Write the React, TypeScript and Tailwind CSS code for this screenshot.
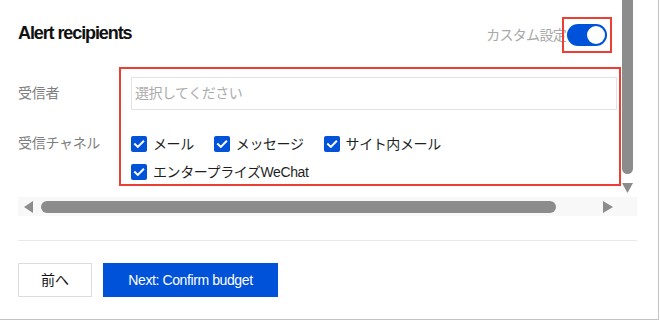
import React from 'react';

const font = { fontFamily: '"Liberation Sans", "Noto Sans CJK JP", sans-serif' };

const CheckItem: React.FC<{ label: string }> = ({ label }) => (
  <label className="flex items-center mr-[20px] h-[20px]">
    <span className="w-[16px] h-[16px] bg-[#0052d9] rounded-[2px] flex items-center justify-center">
      <svg width="12" height="12" viewBox="0 0 12 12" fill="none">
        <path d="M2 6.2 L4.8 8.9 L10.2 3.4" stroke="white" strokeWidth="2" strokeLinecap="square" />
      </svg>
    </span>
    <span className="ml-[6px] text-[14px] tracking-[-0.4px] text-[#1f1f1f] leading-[20px]">{label}</span>
  </label>
);

const App: React.FC = () => {
  return (
    <div className="w-[660px] h-[320px] bg-white" style={font}>
      <div className="w-[659px] h-[320px] border-r border-b border-[#c4c4c4] pl-[18px] pr-[21px] flex flex-col">
        {/* scroll frame */}
        <div className="flex flex-col h-[216px]">
          <div className="flex h-[197px]">
            <div className="w-[603px] overflow-hidden">
              <div className="flex items-center justify-between mt-[17px] h-[36px] pr-[9px]">
                <h3 className="text-[18px] font-bold tracking-[-1.1px] text-[#111] pb-[3px]">
                  Alert recipients
                </h3>
                <div className="flex items-center">
                  <span className="text-[14px] tracking-[-0.7px] text-[#a8a8a8]">カスタム設定</span>
                  <div className="w-[50px] h-[36px] border-2 border-[#ec3f33] flex items-center justify-center -ml-[4px]">
                    <div className="w-[40px] h-[22px] rounded-full bg-[#0052d9] flex items-center justify-end pr-[2px]">
                      <span className="w-[18px] h-[18px] rounded-full bg-white" />
                    </div>
                  </div>
                </div>
              </div>

              <div className="flex mt-[14px]">
                <div className="w-[101px] flex flex-col pt-[16px] gap-[30px] text-[14px] tracking-[-0.3px] text-[#7f7f7f] leading-[20px]">
                  <span>受信者</span>
                  <span>受信チャネル</span>
                </div>
                <div className="flex-1 h-[119px] border-2 border-[#ec3f33] pt-[8px] pl-[10px] pr-[2px]">
                  <div className="h-[33px] border border-[#e3e3e3] flex items-center pl-[3px] text-[14px] tracking-[-0.5px] text-[#ababab]">
                    選択してください
                  </div>
                  <div className="flex mt-[24px]">
                    <CheckItem label="メール" />
                    <CheckItem label="メッセージ" />
                    <CheckItem label="サイト内メール" />
                  </div>
                  <div className="flex mt-[8px]">
                    <CheckItem label="エンタープライズWeChat" />
                  </div>
                </div>
              </div>
            </div>

            {/* vertical scrollbar */}
            <div className="w-[16px] flex flex-col pl-[1px]">
              <div className="w-[11px] h-[174px] bg-[#8c8c8c] rounded-b-[6px]" />
              <svg className="mt-[9px]" width="11" height="10" viewBox="0 0 11 10">
                <polygon points="0,0 11,0 5.5,10" fill="#8c8c8c" />
              </svg>
            </div>
          </div>

          {/* horizontal scrollbar */}
          <div className="h-[19px] bg-[#f8f8f8] flex items-center">
            <svg className="ml-[6px]" width="9" height="12" viewBox="0 0 9 12">
              <polygon points="0,6 9,0 9,12" fill="#8c8c8c" />
            </svg>
            <div className="ml-[8px] w-[515px] h-[12px] rounded-full bg-[#8c8c8c]" />
            <svg className="ml-[47px]" width="10" height="12" viewBox="0 0 10 12">
              <polygon points="0,0 10,6 0,12" fill="#8c8c8c" />
            </svg>
          </div>
        </div>

        <div className="mt-[24px] h-px bg-[#e7e7ee]" />

        <div className="mt-[22px] flex gap-[11px]">
          <button className="w-[74px] h-[34px] border border-[#dcdcdc] bg-white text-[14px] text-[#111]">
            前へ
          </button>
          <button className="w-[175px] h-[34px] bg-[#0052d9] text-white text-[14px] tracking-[-0.4px]">
            Next: Confirm budget
          </button>
        </div>
      </div>
    </div>
  );
};

export default App;
